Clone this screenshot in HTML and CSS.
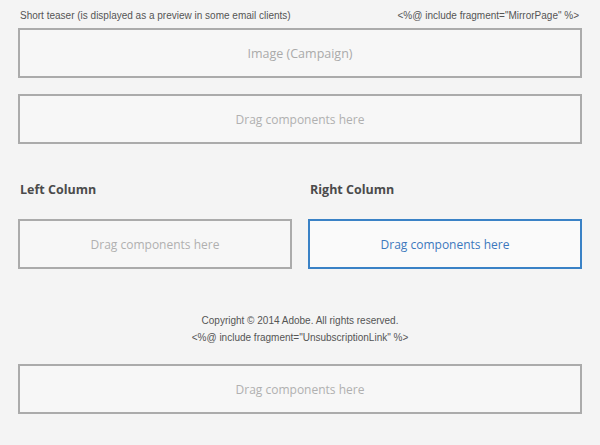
FILE: index.html
```html
<!DOCTYPE html>
<html>
<head>
<meta charset="utf-8">
<link rel="stylesheet" href="styles.css">
</head>
<body>
<div class="page">
  <div class="header">
    <span>Short teaser (is displayed as a preview in some email clients)</span>
    <span>&lt;%@ include fragment="MirrorPage" %&gt;</span>
  </div>
  <div class="drop image">Image (Campaign)</div>
  <div class="drop gap">Drag components here</div>
  <div class="columns">
    <div class="col">
      <h2 class="col-title">Left Column</h2>
      <div class="drop">Drag components here</div>
    </div>
    <div class="col">
      <h2 class="col-title">Right Column</h2>
      <div class="drop active">Drag components here</div>
    </div>
  </div>
  <div class="footer">
    <div>Copyright © 2014 Adobe. All rights reserved.</div>
    <div>&lt;%@ include fragment="UnsubscriptionLink" %&gt;</div>
  </div>
  <div class="drop">Drag components here</div>
</div>
</body>
</html>
```

FILE: styles.css
```css
html, body {
  margin: 0;
  padding: 0;
  background: #f4f4f4;
}
.page {
  padding: 0 18px;
  font-family: "Open Sans", sans-serif;
}
.header {
  display: flex;
  justify-content: space-between;
  align-items: center;
  height: 28px;
  padding: 2px 3px 0 2px;
  box-sizing: border-box;
  font-family: "Liberation Sans", Arial, sans-serif;
  font-size: 10px;
  color: #555;
}
.drop {
  box-sizing: border-box;
  height: 50px;
  border: 2px solid #ababab;
  background: #f7f7f7;
  display: flex;
  align-items: center;
  justify-content: center;
  font-size: 12px;
  color: #b0b0b0;
}
.image {
  font-size: 12.5px;
  color: #aaa;
}
.gap {
  margin-top: 16px;
}
.columns {
  display: grid;
  grid-template-columns: 1fr 1fr;
  gap: 16px;
  padding-top: 37px;
}
.col-title {
  margin: 0 0 20px 2px;
  font-size: 12.5px;
  line-height: 18px;
  font-weight: bold;
  color: #4b4b4b;
}
.active {
  border-color: #3a82c6;
  background: #fafafa;
  color: #3c78bd;
}
.footer {
  padding: 43px 0 18px;
  text-align: center;
  font-family: "Liberation Sans", Arial, sans-serif;
  font-size: 10px;
  line-height: 17px;
  color: #555;
}
```
